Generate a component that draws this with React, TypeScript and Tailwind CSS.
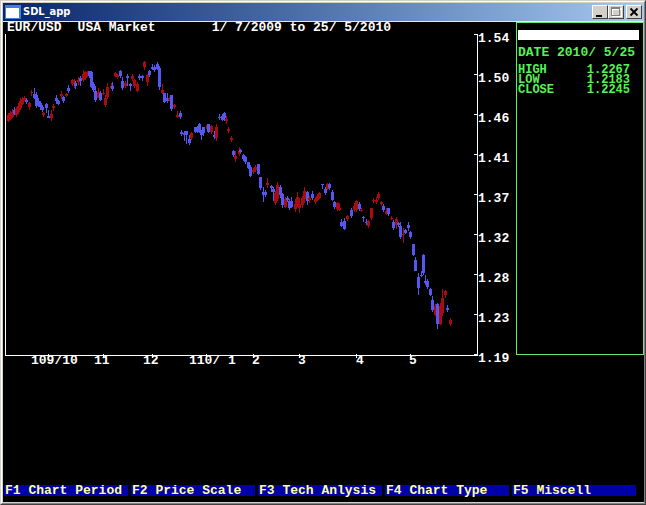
import React from 'react';

type Candle = [x: number, high: number, low: number, top: number, bottom: number, up: 0 | 1];

// x, wick top, wick bottom, body top, body bottom, 1 = rising
const candles: Candle[] = [
  [8, 113, 122, 115, 121, 1], [10, 111, 120, 113, 119, 1], [12, 109, 118, 112, 117, 1],
  [14, 107, 115, 110, 114, 0], [16, 107, 117, 109, 115, 1], [18, 103, 114, 106, 112, 1],
  [20, 98, 110, 101, 108, 1], [22, 97, 105, 99, 104, 1], [24, 96, 101, 98, 100, 1],
  [26, 98, 104, 100, 102, 0], [29, 102, 110, 103, 107, 1], [31, 90, 96, 92, 93, 1],
  [34, 88, 99, 94, 98, 0], [36, 92, 108, 95, 106, 0], [38, 98, 107, 101, 105, 0],
  [40, 101, 110, 103, 107, 0], [42, 105, 112, 107, 110, 0], [43, 112, 117, 113, 115, 1],
  [46, 103, 113, 104, 108, 0], [48, 110, 118, 116, 118, 0], [51, 110, 121, 114, 118, 1],
  [53, 104, 111, 106, 108, 1], [56, 95, 104, 98, 101, 0], [58, 100, 105, 101, 104, 0],
  [61, 91, 99, 94, 96, 1], [63, 96, 103, 97, 101, 0], [66, 93, 97, 94, 96, 1],
  [68, 85, 93, 88, 91, 0], [72, 79, 86, 80, 84, 1], [74, 79, 88, 81, 84, 1],
  [75, 81, 89, 83, 86, 0], [78, 77, 85, 80, 82, 1], [80, 76, 86, 78, 81, 0],
  [83, 70, 82, 74, 80, 1], [85, 71, 80, 72, 78, 1], [87, 71, 77, 72, 76, 1],
  [89, 71, 78, 71, 76, 0], [91, 71, 88, 72, 87, 0], [93, 82, 92, 84, 90, 0],
  [95, 86, 102, 91, 100, 0], [98, 88, 98, 92, 98, 1], [100, 91, 101, 93, 100, 0],
  [103, 89, 95, 93, 94, 1], [105, 95, 107, 98, 105, 1], [107, 83, 99, 87, 97, 1],
  [111, 83, 89, 86, 88, 1], [112, 82, 91, 86, 89, 0], [115, 72, 77, 73, 76, 1],
  [117, 74, 79, 75, 77, 1], [120, 70, 78, 71, 76, 0], [122, 77, 90, 81, 88, 0],
  [125, 81, 88, 83, 86, 1], [127, 74, 86, 76, 78, 0], [130, 83, 91, 84, 86, 0],
  [132, 74, 81, 76, 79, 1], [134, 79, 88, 80, 86, 1], [137, 82, 92, 84, 91, 1],
  [139, 74, 80, 76, 78, 0], [142, 75, 81, 76, 78, 0], [144, 61, 70, 62, 67, 1],
  [147, 74, 86, 75, 82, 1], [149, 70, 77, 71, 75, 0], [152, 64, 70, 67, 69, 0],
  [154, 65, 72, 67, 70, 0], [157, 62, 70, 64, 69, 0], [159, 66, 90, 68, 87, 0],
  [162, 84, 94, 90, 93, 1], [164, 93, 103, 93, 102, 0], [167, 93, 103, 98, 101, 0],
  [169, 97, 101, 98, 100, 1], [171, 95, 111, 95, 109, 0], [174, 104, 109, 105, 107, 1],
  [177, 111, 118, 115, 117, 1], [180, 111, 119, 113, 117, 0], [181, 130, 136, 132, 134, 0],
  [184, 131, 141, 133, 135, 0], [186, 131, 144, 131, 135, 0], [189, 135, 145, 139, 143, 0],
  [191, 132, 140, 133, 138, 1], [195, 127, 133, 127, 132, 0], [197, 126, 133, 128, 131, 0],
  [199, 123, 133, 124, 132, 0], [201, 130, 140, 130, 135, 0], [203, 127, 136, 127, 133, 0],
  [207, 124, 131, 125, 129, 1], [208, 124, 133, 124, 132, 0], [211, 125, 134, 126, 132, 1],
  [214, 131, 139, 135, 137, 0], [216, 124, 141, 127, 138, 1], [219, 114, 120, 117, 118, 0],
  [222, 114, 121, 116, 120, 0], [224, 112, 121, 113, 118, 0], [226, 116, 124, 119, 121, 1],
  [228, 127, 133, 129, 131, 1], [231, 136, 142, 138, 140, 1], [233, 150, 157, 151, 155, 0],
  [235, 151, 162, 156, 159, 1], [239, 147, 156, 151, 154, 1], [240, 149, 153, 150, 152, 0],
  [243, 154, 161, 155, 159, 0], [245, 156, 164, 157, 162, 0], [248, 162, 169, 162, 168, 0],
  [250, 165, 177, 167, 176, 0], [253, 168, 174, 170, 172, 1], [255, 165, 172, 167, 170, 1],
  [258, 164, 175, 164, 174, 0], [260, 177, 190, 177, 188, 0], [263, 187, 202, 192, 195, 0],
  [265, 190, 197, 192, 195, 0], [267, 178, 188, 183, 185, 1], [271, 185, 192, 186, 188, 0],
  [273, 187, 201, 189, 192, 0], [275, 191, 205, 193, 203, 1], [277, 182, 201, 185, 199, 1],
  [280, 185, 198, 187, 195, 0], [282, 193, 208, 194, 205, 0], [285, 197, 208, 199, 207, 1],
  [287, 196, 202, 198, 200, 0], [289, 199, 210, 201, 208, 0], [291, 197, 208, 201, 207, 0],
  [295, 199, 212, 204, 209, 1], [297, 192, 207, 197, 205, 1], [299, 198, 213, 204, 208, 1],
  [302, 196, 208, 198, 205, 1], [304, 187, 203, 191, 199, 1], [307, 191, 205, 192, 201, 0],
  [309, 196, 203, 198, 200, 1], [312, 191, 200, 194, 198, 0], [315, 197, 204, 199, 202, 1],
  [317, 194, 201, 196, 200, 1], [319, 192, 199, 193, 198, 1], [322, 184, 189, 184, 185, 0],
  [325, 187, 195, 189, 193, 0], [327, 183, 190, 184, 189, 1], [329, 183, 190, 184, 188, 0],
  [332, 190, 201, 192, 200, 0], [334, 201, 209, 202, 207, 0], [337, 202, 211, 203, 209, 1],
  [339, 203, 211, 208, 210, 1], [341, 219, 227, 222, 226, 0], [344, 218, 230, 221, 229, 0],
  [347, 215, 221, 216, 219, 1], [351, 208, 218, 210, 216, 0], [354, 203, 212, 206, 210, 1],
  [356, 200, 212, 201, 210, 1], [359, 202, 211, 204, 209, 0], [361, 208, 212, 210, 211, 1],
  [363, 216, 222, 217, 218, 0], [366, 219, 225, 222, 223, 0], [368, 220, 228, 221, 226, 1],
  [371, 208, 220, 208, 218, 1], [373, 198, 203, 200, 201, 1], [376, 197, 204, 200, 202, 1],
  [378, 192, 200, 194, 198, 1], [381, 201, 206, 202, 204, 1], [383, 204, 212, 206, 210, 0],
  [386, 208, 215, 211, 214, 1], [388, 208, 216, 208, 214, 0], [391, 216, 220, 218, 219, 1],
  [393, 220, 230, 222, 228, 0], [396, 217, 229, 219, 225, 1], [398, 222, 227, 223, 225, 0],
  [400, 222, 239, 226, 237, 0], [403, 228, 243, 234, 235, 1], [405, 229, 234, 230, 233, 0],
  [408, 222, 231, 225, 228, 0], [410, 231, 239, 232, 237, 0], [413, 244, 256, 244, 255, 0],
  [415, 257, 271, 260, 271, 0], [418, 273, 295, 277, 288, 0], [421, 271, 277, 275, 276, 0],
  [423, 254, 275, 255, 273, 0], [425, 275, 285, 281, 283, 0], [427, 279, 289, 281, 287, 0],
  [430, 288, 296, 289, 295, 0], [432, 296, 312, 300, 310, 0], [435, 304, 316, 306, 315, 1],
  [437, 303, 329, 304, 324, 0], [440, 303, 325, 306, 324, 1], [442, 289, 316, 298, 313, 1],
  [445, 290, 298, 291, 295, 1], [447, 305, 312, 308, 310, 0], [450, 318, 326, 320, 324, 1],
];

const prices = ['1.54', '1.50', '1.46', '1.41', '1.37', '1.32', '1.28', '1.23', '1.19'];

const months = [
  { label: '109/10', x: 31, tick: 48 },
  { label: '11', x: 94, tick: 103 },
  { label: '12', x: 143, tick: 152 },
  { label: '110/ 1', x: 189, tick: 206 },
  { label: '2', x: 252, tick: 253 },
  { label: '3', x: 298, tick: 299 },
  { label: '4', x: 356, tick: 356 },
  { label: '5', x: 409, tick: 410 },
];

const quotes = [
  { name: 'HIGH', value: '1.2267' },
  { name: 'LOW', value: '1.2183' },
  { name: 'CLOSE', value: '1.2245' },
];

const menu = ['F1 Chart Period', 'F2 Price Scale', 'F3 Tech Anlysis', 'F4 Chart Type', 'F5 Miscell'];

const captionButton =
  'flex h-3.5 w-4 items-center justify-center border border-t-white border-l-white border-r-[#404040] border-b-[#404040] bg-[#d4d0c8]';

function TitleBar() {
  return (
    <header className="flex h-[18px] items-center bg-linear-to-r from-[#0a246a] to-[#a6caf0] pr-0.5 pl-0.5">
      <svg viewBox="0 0 16 14" className="mr-0.5 h-3.5 w-4" shapeRendering="crispEdges" aria-hidden="true">
        <rect width="16" height="14" fill="#3b82dc" />
        <rect x="1" y="3" width="13" height="10" fill="#fff" />
      </svg>
      <h1 className="flex-1 font-['DejaVu_Sans_Condensed','DejaVu_Sans',sans-serif] text-[11px] leading-4 font-bold text-white">
        SDL_app
      </h1>
      <div className="flex">
        <button className={captionButton} aria-label="Minimize">
          <svg viewBox="0 0 12 10" className="h-2.5 w-3" shapeRendering="crispEdges">
            <rect x="2" y="8" width="6" height="2" fill="#000" />
          </svg>
        </button>
        <button className={captionButton} aria-label="Maximize" disabled>
          <svg viewBox="0 0 12 10" className="h-2.5 w-3" shapeRendering="crispEdges">
            <path d="M2 1.5h9v8H2zM2 2.5h9" fill="none" stroke="#fff" />
            <path d="M1.5 .5h8v8h-8zM1 1.5h9" fill="none" stroke="#808080" />
          </svg>
        </button>
        <button className={`${captionButton} ml-0.5`} aria-label="Close">
          <svg viewBox="0 0 12 10" className="h-2.5 w-3">
            <path d="M2.5 1.5l7 7M9.5 1.5l-7 7" fill="none" stroke="#000" strokeWidth="1.8" />
          </svg>
        </button>
      </div>
    </header>
  );
}

function PriceChart() {
  return (
    <svg
      viewBox="3 34 513 334"
      className="block w-full overflow-visible"
      role="img"
      aria-label="EUR/USD candlestick chart"
    >
      <g shapeRendering="crispEdges">
        {candles.map(([x, high, low, top, bottom, up]) => (
          <g key={x} fill={up ? '#a80c10' : '#5656f0'}>
            <rect x={x} y={high} width="1" height={low - high} />
            <rect x={x - 1} y={top} width="3" height={bottom - top} />
          </g>
        ))}
        <path d="M5.5 34V355.5H477.5V34" fill="none" stroke="#fff" />
        {prices.map((price, i) => (
          <rect key={price} x="474" y={34 + i * 40} width="3" height="1" fill="#fff" />
        ))}
        {months.map((month) => (
          <rect key={month.tick} x={month.tick} y="354" width="1" height="4" fill="#fff" />
        ))}
      </g>
      <g fill="#fff" fontSize="13">
        {prices.map((price, i) => (
          <text key={price} x="478" y={42 + i * 40}>
            {price}
          </text>
        ))}
        {months.map((month) => (
          <text key={month.label} x={month.x} y="364" xmlSpace="preserve">
            {month.label}
          </text>
        ))}
      </g>
    </svg>
  );
}

function QuotePanel() {
  return (
    <aside className="h-[333px] w-32 shrink-0 border border-[#6ce86c] text-[#54f454]">
      <div className="mt-[7px] mr-1 ml-px h-2.5 bg-white" />
      <p className="mt-2 ml-px leading-[9px] whitespace-pre">DATE 2010/ 5/25</p>
      <table className="mt-2 ml-px w-[112px] text-xs leading-[10px]">
        <tbody>
          {quotes.map((quote) => (
            <tr key={quote.name}>
              <th scope="row" className="p-0 text-left font-bold">
                {quote.name}
              </th>
              <td className="p-0 text-right">{quote.value}</td>
            </tr>
          ))}
        </tbody>
      </table>
    </aside>
  );
}

export default function App() {
  return (
    <div className="flex min-h-screen flex-col border border-t-[#d4d0c8] border-r-[#404040] border-b-[#404040] border-l-[#d4d0c8] bg-[#d4d0c8]">
      <div className="flex flex-1 flex-col border border-t-white border-r-[#808080] border-b-[#808080] border-l-white pt-px pb-px pl-px">
        <TitleBar />
        <div className="h-px bg-[#e8e8e8]" />
        <main className="flex flex-1 flex-col bg-black font-['Liberation_Mono',monospace] text-[13px] font-bold text-white">
          <div className="flex items-start">
            <section className="min-w-0 flex-1">
              <h2 className="flex h-3 pl-1 leading-[11px] whitespace-pre">
                <span className="mr-4">EUR/USD</span>
                <span className="mr-14">USA Market</span>
                <span>1/ 7/2009 to 25/ 5/2010</span>
              </h2>
              <PriceChart />
            </section>
            <QuotePanel />
          </div>
          <nav className="mt-auto mr-2 mb-1.5 ml-px grid grid-cols-5 gap-[3px]">
            {menu.map((item) => (
              <button
                key={item}
                className="h-[11px] bg-[#0000a8] pl-px text-left leading-[11px] whitespace-nowrap text-[#ffff9c]"
              >
                {item}
              </button>
            ))}
          </nav>
        </main>
      </div>
    </div>
  );
}
